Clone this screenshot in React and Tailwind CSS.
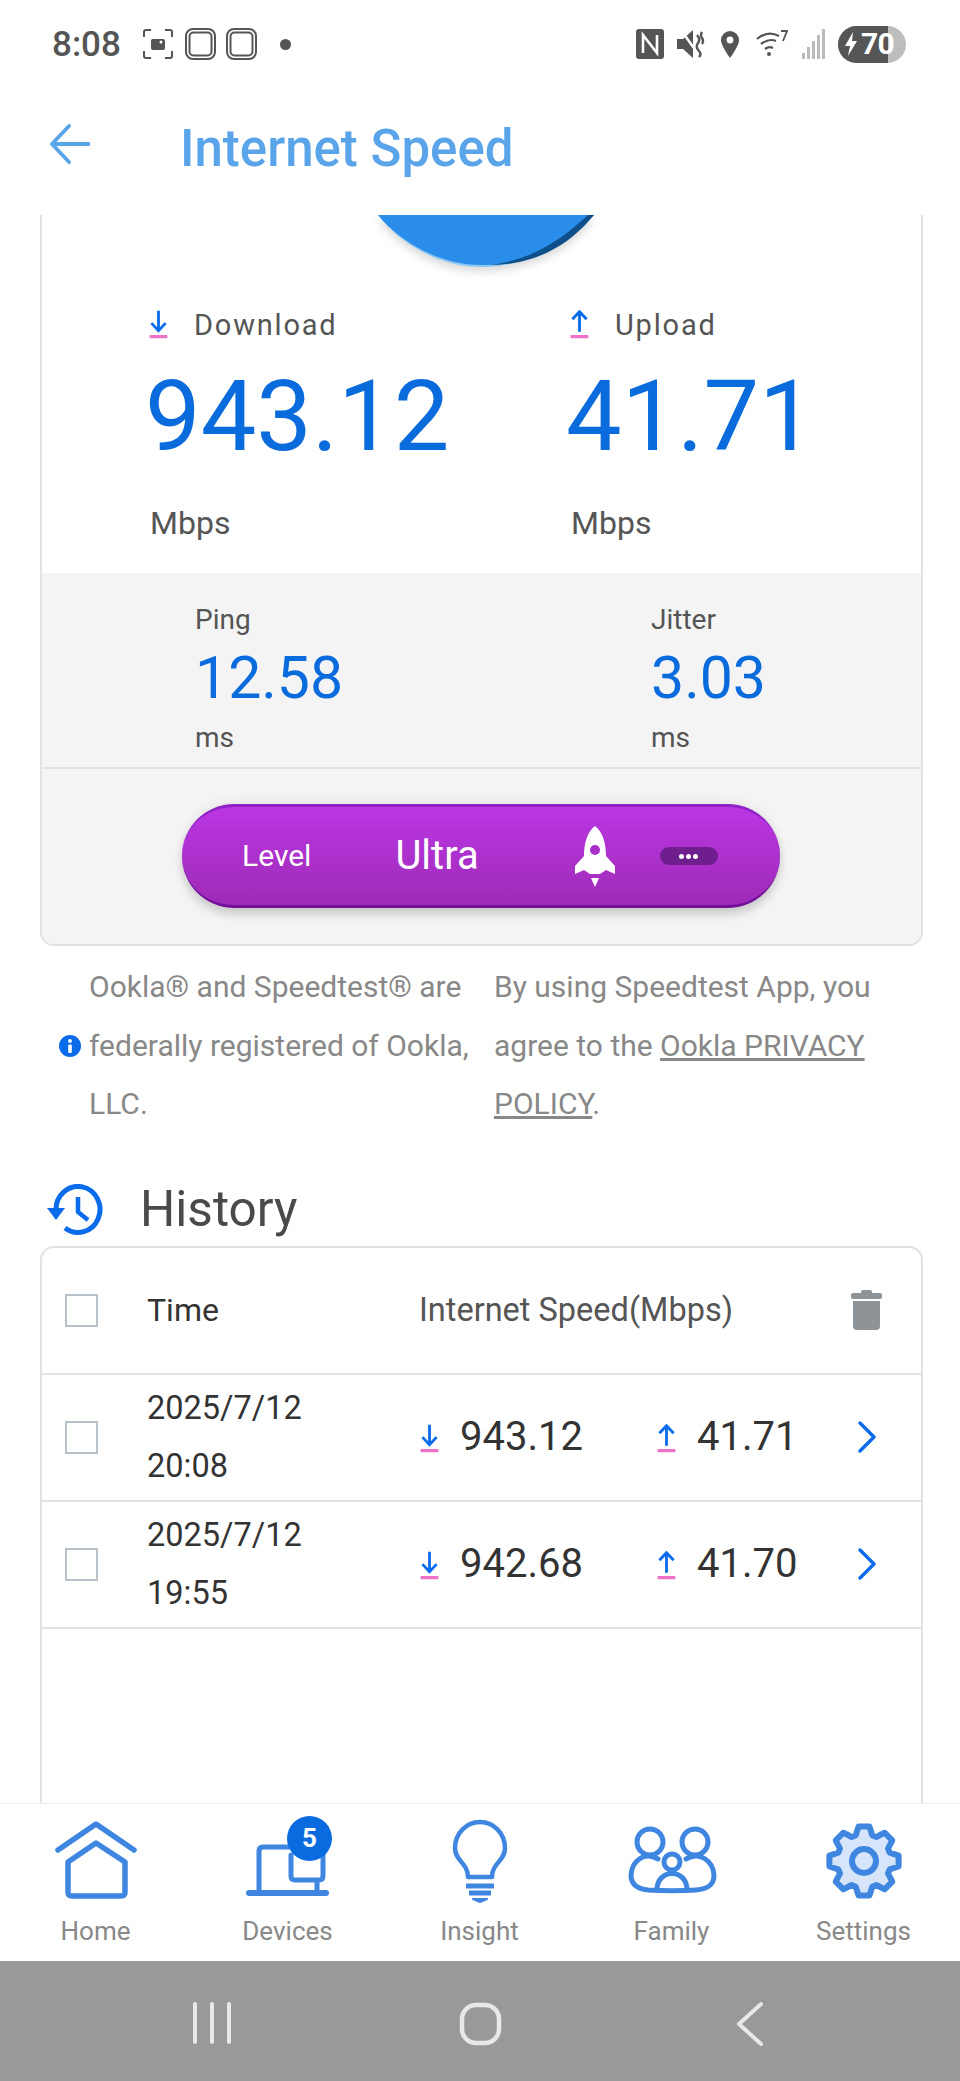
import React from 'react';

const font = { fontFamily: 'Roboto, sans-serif' };

const gearPath = () => {
  // 8 toothed gear, centred on 48,46
  const pts = [];
  for (let i = 0; i < 8; i++) {
    const a = (i * Math.PI) / 4 - Math.PI / 2;
    const step = Math.PI / 8;
    [[-1.1, 27], [-0.55, 35], [0.55, 35], [1.1, 27]].forEach(([k, r]) => {
      const t = a + k * step * 0.72;
      pts.push(`${(48 + r * Math.cos(t)).toFixed(1)} ${(46 + r * Math.sin(t)).toFixed(1)}`);
    });
  }
  return `M${pts.join(' L')} Z`;
};

const DownArrow = ({ className = '' }) => (
  <svg viewBox="0 0 20 30" className={className}>
    <path d="M10 0v21M2.5 13 10 21l7.5-8" fill="none" stroke="#0b6ceb" strokeWidth="3" />
    <rect x="0.5" y="25.5" width="19" height="3.5" rx="1" fill="#ef72c9" />
  </svg>
);

const UpArrow = ({ className = '' }) => (
  <svg viewBox="0 0 20 30" className={className}>
    <path d="M10 22V1M2.5 9 10 1l7.5 8" fill="none" stroke="#0b6ceb" strokeWidth="3" />
    <rect x="0.5" y="25.5" width="19" height="3.5" rx="1" fill="#ef72c9" />
  </svg>
);

const Chevron = () => (
  <svg viewBox="0 0 20 32" className="w-[20px] h-[32px]">
    <path d="M3 2l14 14L3 30" fill="none" stroke="#0b6ceb" strokeWidth="3.4" strokeLinecap="round" strokeLinejoin="round" />
  </svg>
);

const Checkbox = () => <div className="w-[33px] h-[33px] border-2 border-[#b8c2c8] bg-white shrink-0" />;

const StatusBar = () => (
  <div className="h-[88px] shrink-0 flex items-center pl-[52px] pr-[54px] text-[#555]">
    <span className="text-[35px] font-medium leading-none w-[91px]">8:08</span>
    <svg viewBox="0 0 30 30" className="w-[30px] h-[30px] mr-[12px]" fill="none" stroke="#555" strokeWidth="2">
      <path d="M1 8V3q0-2 2-2h5M22 1h5q2 0 2 2v5M29 22v5q0 2-2 2h-5M8 29H3q-2 0-2-2v-5" />
      <rect x="8" y="10" width="14" height="11" rx="2" fill="#555" stroke="none" />
      <circle cx="18" cy="13" r="1.5" fill="#fff" stroke="none" />
    </svg>
    <svg viewBox="0 0 31 32" className="w-[31px] h-[32px] mr-[10px]" fill="none" stroke="#555" strokeWidth="2">
      <rect x="1" y="1" width="29" height="30" rx="7" />
      <rect x="4.5" y="4.5" width="22" height="23" rx="4" />
    </svg>
    <svg viewBox="0 0 31 32" className="w-[31px] h-[32px]" fill="none" stroke="#555" strokeWidth="2">
      <rect x="1" y="1" width="29" height="30" rx="7" />
      <rect x="4.5" y="4.5" width="22" height="23" rx="4" />
    </svg>
    <div className="w-[11px] h-[11px] rounded-full bg-[#555] ml-[23px]" />
    <div className="flex-1" />
    <svg viewBox="0 0 28 30" className="w-[28px] h-[30px]">
      <rect width="28" height="30" rx="3" fill="#555" />
      <path d="M7 24V6l14 18V6" fill="none" stroke="#fff" strokeWidth="2.6" />
    </svg>
    <svg viewBox="0 0 28 30" className="w-[28px] h-[30px] ml-[13px]" fill="#555">
      <path d="M0 10h6l10-9v28L6 20H0z" />
      <path d="M4 1l20 28" stroke="#fff" strokeWidth="2.4" />
      <path d="M20 6q4 4 1 8t1 8q3 3 0 6M25 3q-2 3 0 6t0 6" fill="none" stroke="#555" strokeWidth="2.4" />
    </svg>
    <svg viewBox="0 0 18 27" className="w-[18px] h-[27px] ml-[16px]">
      <path d="M9 0a9 9 0 0 1 9 9c0 6-9 18-9 18S0 15 0 9a9 9 0 0 1 9-9z" fill="#555" />
      <circle cx="9" cy="9" r="3.4" fill="#fff" />
    </svg>
    <svg viewBox="0 0 32 28" className="w-[32px] h-[28px] ml-[17px]" fill="none" stroke="#555" strokeWidth="2.2">
      <path d="M1 9q11-9 22-3M5 14q8-6 15-3M9 19q4-3 8-1" />
      <circle cx="13" cy="24" r="2" fill="#555" stroke="none" />
      <path d="M25 1h6l-4 10" strokeWidth="1.8" />
    </svg>
    <svg viewBox="0 0 24 30" className="w-[24px] h-[30px] ml-[14px]" fill="#bbb">
      <rect x="0" y="24" width="3" height="6" />
      <rect x="5" y="18" width="3" height="12" />
      <rect x="10" y="12" width="3" height="18" />
      <rect x="15" y="6" width="3" height="24" />
      <rect x="20" y="0" width="3" height="30" />
    </svg>
    <div className="relative w-[68px] h-[37px] ml-[12px] rounded-full overflow-hidden bg-[#bdbdbd] flex items-center">
      <div className="absolute left-0 top-0 bottom-0 w-[50px] bg-[#555]" />
      <svg viewBox="0 0 14 24" className="relative w-[14px] h-[24px] ml-[6px]">
        <path d="M9 0 1 14h5l-2 10 9-15H8z" fill="#fff" />
      </svg>
      <span className="relative text-white text-[30px] font-bold leading-none ml-[3px] tracking-tight">70</span>
    </div>
  </div>
);

const Header = () => (
  <div className="h-[127px] shrink-0 flex items-start pt-[36px] pl-[50px]">
    <svg viewBox="0 0 40 40" className="w-[40px] h-[40px]" fill="none" stroke="#5aa4ea" strokeWidth="3.8" strokeLinecap="round" strokeLinejoin="round">
      <path d="M39 20H2M19 2 2 20l17 18" />
    </svg>
    <h1 className="ml-[90px] text-[51px] leading-[49px] font-medium text-[#5aa4ea]">Internet Speed</h1>
  </div>
);

const Gauge = () => (
  <div className="h-[95px] flex justify-center pl-[8px]">
    <svg viewBox="0 0 250 60" className="w-[250px] h-[60px] drop-shadow-[0_4px_5px_rgba(0,0,0,0.16)]">
      <path d="M17 0C40 30 80 52 120 52 165 52 200 30 233 0z" fill="#8cc8f5" />
      <path d="M17 0C40 28 80 50 120 50 165 50 200 30 233 0z" fill="#2a8dea" />
      <path d="M233 0C205 34 170 50 128 50 165 46 195 30 227 0z" fill="#0d4f8a" />
    </svg>
  </div>
);

const SpeedColumn = ({ arrow, label, value, width }) => (
  <div className={width}>
    <div className="flex items-center h-[30px]">
      {arrow}
      <span className="ml-[26px] text-[29px] leading-[29px] tracking-[1.8px] text-[#555]">{label}</span>
    </div>
    <div className="mt-[26px] text-[99px] leading-[100px] text-[#0a6bdc] -ml-[4px]">{value}</div>
    <div className="mt-[37px] text-[32px] leading-[40px] text-[#555] ml-[1px]">Mbps</div>
  </div>
);

const SubStat = ({ label, value, width }) => (
  <div className={width}>
    <div className="text-[28px] leading-[40px] text-[#555]">{label}</div>
    <div className="mt-[6px] text-[59px] leading-[64px] text-[#0a6bdc]">{value}</div>
    <div className="mt-[8px] text-[28px] leading-[40px] text-[#555]">ms</div>
  </div>
);

const Rocket = () => (
  <svg viewBox="0 0 42 61" className="w-[42px] h-[61px]">
    <path d="M21 0C13 6 10 18 10 30L1 40v8l9-4 6 4h10l6-4 9 4v-8l-9-10C32 18 29 6 21 0z" fill="#fff" />
    <circle cx="21" cy="24" r="5" fill="#a82fc8" />
    <path d="M17 52h8l-4 9z" fill="#fff" />
  </svg>
);

const LevelPill = () => (
  <div className="h-[104px] w-[598px] rounded-full flex items-center bg-gradient-to-b from-[#bb36e4] to-[#9e2bb6] border-y-[3px] border-t-[#8f22c6] border-b-[#72109a] shadow-[0_6px_10px_rgba(0,0,0,0.18),0_-6px_10px_rgba(0,0,0,0.03)] text-white">
    <span className="ml-[60px] text-[30px] leading-none">Level</span>
    <span className="ml-[84px] text-[40px] leading-none">Ultra</span>
    <div className="ml-[95px]"><Rocket /></div>
    <div className="ml-[44px] w-[58px] h-[18px] rounded-full bg-[#6f1e8e] flex items-center justify-center gap-[2px]">
      <div className="w-[5px] h-[5px] rounded-full bg-white" />
      <div className="w-[5px] h-[5px] rounded-full bg-white" />
      <div className="w-[5px] h-[5px] rounded-full bg-white" />
    </div>
  </div>
);

const Notes = () => (
  <div className="flex pt-[12px] text-[30px] leading-[58.5px] text-[#888]">
    <div className="w-[30px] ml-[59px] flex items-center shrink-0">
      <svg viewBox="0 0 22 22" className="w-[22px] h-[22px]">
        <circle cx="11" cy="11" r="11" fill="#0b6ceb" />
        <circle cx="11" cy="6" r="1.9" fill="#fff" />
        <rect x="9.2" y="9.5" width="3.6" height="8.5" rx="1" fill="#fff" />
      </svg>
    </div>
    <p className="w-[405px] shrink-0">Ookla® and Speedtest® are federally registered of Ookla, LLC.</p>
    <p className="w-[385px] shrink-0">
      By using Speedtest App, you agree to the <span className="underline">Ookla PRIVACY POLICY</span>.
    </p>
  </div>
);

const HistoryRow = ({ date, time, down, up }) => (
  <div className="h-[127px] flex items-center border-b-2 border-[#e2e2e2] pl-[23px] text-[#333]">
    <Checkbox />
    <div className="ml-[49px] w-[273px] text-[32.5px] leading-[58px]">
      <div>{date}</div>
      <div>{time}</div>
    </div>
    <DownArrow className="w-[19px] h-[30px] mt-[4px] shrink-0" />
    <span className="ml-[21px] w-[197px] shrink-0 text-[40px] leading-none">{down}</span>
    <UpArrow className="w-[19px] h-[30px] mt-[4px] shrink-0" />
    <span className="ml-[21px] w-[160px] shrink-0 text-[40px] leading-none">{up}</span>
    <Chevron />
  </div>
);

const BottomNav = () => {
  const stroke = { fill: 'none', stroke: '#3f86e0', strokeWidth: 5, strokeLinecap: 'round', strokeLinejoin: 'round' };
  const items = [
    {
      label: 'Home',
      icon: (
        <svg viewBox="0 0 96 90" className="w-[96px] h-[90px]" {...stroke}>
          <path d="M10 35 48 9l38 26" strokeWidth="5.5" />
          <path d="M20 47 48 28l29 19v30q0 4-4 4H24q-4 0-4-4z" strokeWidth="5.5" />
        </svg>
      ),
    },
    {
      label: 'Devices',
      icon: (
        <svg viewBox="0 0 96 90" className="w-[96px] h-[90px]" {...stroke}>
          <path d="M19 76V36q0-4 4-4h34" />
          <path d="M9 78h77" strokeWidth="6" />
          <path d="M51 40v21q0 4 4 4h24q4 0 4-4V40" />
          <path d="M77 66v10" />
        </svg>
      ),
      badge: '5',
    },
    {
      label: 'Insight',
      icon: (
        <svg viewBox="0 0 96 90" className="w-[96px] h-[90px]" {...stroke} strokeLinecap="butt">
          <path d="M36 62C36 48 23 46 23 33A25 26 0 0 1 73 33C73 46 60 48 60 62Z" strokeWidth="4.5" />
          <path d="M34 71h28M37 78h22" strokeWidth="5" />
          <path d="M41 84h14l-7 3z" strokeWidth="2" fill="#3f86e0" />
        </svg>
      ),
    },
    {
      label: 'Family',
      icon: (
        <svg viewBox="0 0 96 90" className="w-[96px] h-[90px]" {...stroke}>
          <circle cx="26" cy="27" r="13" />
          <circle cx="71" cy="27" r="13" />
          <circle cx="48" cy="47" r="8" />
          <path d="M34 44C20 36 8 46 7 60c0 10 7 14 17 15 16 1 32 1 48 0 12-1 18-5 18-15-1-14-14-24-28-16" />
          <path d="M33 75c0-22 30-22 30 0" />
        </svg>
      ),
    },
    {
      label: 'Settings',
      icon: (
        <svg viewBox="0 0 96 90" className="w-[96px] h-[90px]" {...stroke} fill="#d6e5fa">
          <path d={gearPath()} strokeWidth="6" />
          <circle cx="48" cy="46" r="12" strokeWidth="6" />
        </svg>
      ),
    },
  ];
  return (
    <div className="h-[158px] shrink-0 grid grid-cols-5 bg-white border-t border-[#eee]">
      {items.map((item) => (
        <div key={item.label} className="relative flex flex-col items-center pt-[11px]">
          {item.icon}
          <span className="mt-[10px] -ml-[1px] text-[26px] leading-[32px] text-[#888]">{item.label}</span>
          {item.badge && (
            <div className="absolute left-[95px] top-[12px] w-[45px] h-[45px] rounded-full bg-[#0a6be0] text-white font-bold text-[26px] flex items-center justify-center">
              {item.badge}
            </div>
          )}
        </div>
      ))}
    </div>
  );
};

export default function App() {
  return (
    <div style={font} className="w-[960px] h-[2081px] flex flex-col bg-white overflow-hidden">
      <StatusBar />
      <Header />

      <div className="flex-1 min-h-0 overflow-hidden">
        {/* Speed card */}
        <div className="ml-[40px] w-[883px] border-x-2 border-b-2 border-[#e2e2e2] rounded-b-[14px] overflow-hidden">
          <Gauge />
          <div className="flex pl-[107px] pb-[30px]">
            <SpeedColumn width="w-[421px]" arrow={<DownArrow className="w-[19px] h-[30px]" />} label="Download" value="943.12" />
            <SpeedColumn arrow={<UpArrow className="w-[19px] h-[30px]" />} label="Upload" value="41.71" />
          </div>
          <div className="bg-[#f4f4f4]">
            <div className="flex pl-[153px] pt-[27px] pb-[9px] border-b-2 border-[#e2e2e2]">
              <SubStat width="w-[456px]" label="Ping" value="12.58" />
              <SubStat label="Jitter" value="3.03" />
            </div>
            <div className="h-[175px] flex justify-center pt-[35px] pr-[1px]">
              <LevelPill />
            </div>
          </div>
        </div>

        <Notes />

        <div className="h-[112px] pt-[40px] flex items-center pl-[47px]">
          <svg viewBox="0 0 60 52" className="w-[60px] h-[52px]">
            <path d="M9 26A22 23 0 1 1 18 44" fill="none" stroke="#0b6ceb" strokeWidth="5" />
            <path d="M0 24h18L9 36z" fill="#0b6ceb" />
            <path d="M31 13v15l10 8" fill="none" stroke="#0b6ceb" strokeWidth="4.5" />
          </svg>
          <span className="ml-[33px] text-[49.5px] leading-none text-[#4a4a4a]">History</span>
        </div>

        {/* History table */}
        <div className="ml-[40px] w-[883px] h-[700px] border-x-2 border-t-2 border-[#e2e2e2] rounded-t-[14px]">
          <div className="h-[127px] flex items-center border-b-2 border-[#e2e2e2] pl-[23px]">
            <Checkbox />
            <span className="ml-[49px] w-[272px] text-[32px] leading-none text-[#333]">Time</span>
            <span className="w-[432px] text-[32.5px] leading-none text-[#555]">Internet Speed(Mbps)</span>
            <svg viewBox="0 0 31 40" className="w-[31px] h-[40px]" fill="#8e9398">
              <rect x="0" y="3" width="31" height="6" rx="2" />
              <rect x="10" y="0" width="11" height="5" rx="2" />
              <path d="M2 11h27v25q0 4-4 4H6q-4 0-4-4z" />
            </svg>
          </div>
          <HistoryRow date="2025/7/12" time="20:08" down="943.12" up="41.71" />
          <HistoryRow date="2025/7/12" time="19:55" down="942.68" up="41.70" />
        </div>
      </div>

      <BottomNav />

      <div className="h-[120px] shrink-0 bg-[#999]">
        <svg viewBox="0 0 960 120" className="w-[960px] h-[120px]" fill="none" stroke="#e8e8e8" strokeWidth="4" strokeLinecap="round" strokeLinejoin="round">
          <path d="M195 43v38M212 43v38M229 43v38" />
          <rect x="462" y="44" width="37" height="38" rx="14" strokeWidth="4.5" />
          <path d="M761 43 739 63l22 20" />
        </svg>
      </div>
    </div>
  );
}
